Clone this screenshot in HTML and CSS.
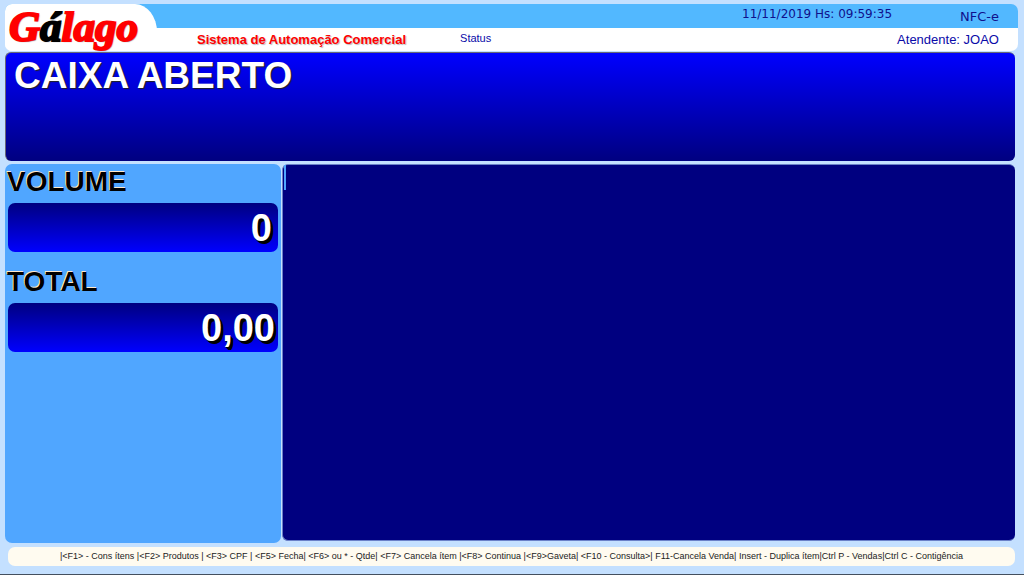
FILE: index.html
```html
<!DOCTYPE html>
<html lang="pt-BR">
<head>
<meta charset="utf-8">
<meta name="viewport" content="width=device-width, initial-scale=1">
<title>Gálago - Sistema de Automação Comercial</title>
<link rel="stylesheet" href="styles.css">
</head>
<body>
<div class="app">
  <header class="header">
    <div class="brand"><h1 class="logo">G<span class="logo-dark">á</span>lago</h1></div>
    <div class="info">
      <div class="info-top">
        <time class="clock">11/11/2019 Hs: 09:59:35</time>
        <span class="doc-type">NFC-e</span>
      </div>
      <div class="info-bottom">
        <strong class="tagline">Sistema de Automação Comercial</strong>
        <span class="status">Status</span>
        <span class="attendant">Atendente: JOAO</span>
      </div>
    </div>
  </header>
  <section class="banner"><h2 class="banner-text">CAIXA ABERTO</h2></section>
  <main class="main">
    <aside class="totals">
      <h3 class="label">VOLUME</h3>
      <output class="value value-volume">0</output>
      <h3 class="label">TOTAL</h3>
      <output class="value">0,00</output>
    </aside>
    <section class="items"><div class="caret"></div></section>
  </main>
  <footer class="shortcuts">|&lt;F1&gt; - Cons ítens |&lt;F2&gt; Produtos | &lt;F3&gt; CPF | &lt;F5&gt; Fecha| &lt;F6&gt; ou * - Qtde| &lt;F7&gt; Cancela ítem |&lt;F8&gt; Continua |&lt;F9&gt;Gaveta| &lt;F10 - Consulta&gt;| F11-Cancela Venda| Insert - Duplica ítem|Ctrl P - Vendas|Ctrl C - Contigência</footer>
</div>
</body>
</html>
```
FILE: styles.css
```css
* { box-sizing: border-box; }
body {
  margin: 0;
  background: #c4e0ff;
  font-family: "Liberation Sans", Arial, sans-serif;
}
h1, h2, h3 { margin: 0; }
.app {
  display: flex;
  flex-direction: column;
  min-height: 100vh;
  padding: 4px 6px 8px 5px;
  border-bottom: 1px solid #44505f;
}
.header {
  display: flex;
  height: 47px;
  border-radius: 7px;
  background: linear-gradient(#52b8ff 24px, #fff 24px);
}
.brand {
  width: 152px;
  padding-left: 4px;
  background: #fff;
  border-radius: 7px 22px 0 7px / 7px 28px 0 7px;
}
.logo {
  font: italic 900 43px/46px "Liberation Serif", "Times New Roman", serif;
  color: #f00;
  -webkit-text-stroke: 2px currentColor;
  text-shadow: 1px 1px 1px #667;
}
.logo-dark { color: #000; }
.info { flex: 1; }
.info-top, .info-bottom {
  display: flex;
  align-items: center;
  height: 24px;
  padding-right: 19px;
}
.info-top {
  justify-content: flex-end;
  gap: 68px;
  font-family: "DejaVu Sans", Verdana, sans-serif;
  color: #10108c;
}
.clock { font-size: 12px; line-height: 20px; align-self: flex-start; }
.doc-type { font-size: 13px; }
.info-bottom { padding-left: 40px; color: #0a0aa8; height: 22px; }
.tagline {
  font-size: 13px;
  color: #f00;
  text-shadow: 1px 1px 1px #bbb;
}
.status { margin-left: 54px; font-size: 11px; line-height: 20px; align-self: flex-start; }
.attendant { margin-left: auto; font-size: 13px; }
.banner {
  height: 109px;
  margin: 1px 3px 0 0;
  padding: 1px 8px;
  border-top: 1px solid #667;
  border-left: 1px solid #667;
  border-radius: 6px;
  background: linear-gradient(#00f, #000080);
}
.banner-text {
  font-size: 37px;
  line-height: 44px;
  color: #fff;
  text-shadow: 1px 1px 1px #222;
}
.main {
  display: grid;
  grid-template-columns: 276px 1fr;
  gap: 1px;
  flex: 1;
  margin: 3px 3px 0 0;
}
.totals {
  display: flex;
  flex-direction: column;
  padding: 0 3px 8px 3px;
  border-radius: 7px;
  background: #50a6ff;
}
.label {
  margin-left: -1px;
  padding-bottom: 3px;
  font-size: 28px;
  line-height: 36px;
  color: #000;
  text-shadow: -1px -1px 0 #ffe8cc;
}
.value {
  height: 49px;
  margin-bottom: 12px;
  padding-right: 3px;
  border-radius: 7px;
  background: linear-gradient(#000080, #00f);
  color: #fff;
  font-size: 38px;
  font-weight: bold;
  line-height: 50px;
  text-align: right;
  text-shadow: 1px 1px 0 #000, 2px 2px 0 #000, 3px 3px 0 #000;
}
.value-volume { padding-right: 6px; }
.items {
  margin-bottom: 2px;
  border: 1px solid #6a80c8;
  border-width: 1px 0 1px 1px;
  border-radius: 6px;
  background: #000080;
}
.caret { width: 3px; height: 25px; border-right: 2px solid #50a6ff; }
.shortcuts {
  margin: 4px 3px 0;
  border-radius: 7px;
  background: #fffbf0;
  color: #222;
  font-size: 9px;
  line-height: 19px;
  text-align: center;
}
```
